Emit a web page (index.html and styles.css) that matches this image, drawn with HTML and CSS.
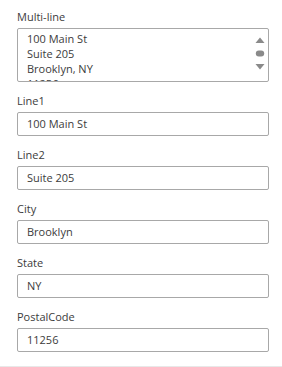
FILE: index.html
```html
<!DOCTYPE html>
<html>
<head>
<meta charset="utf-8">
<link rel="stylesheet" href="styles.css">
</head>
<body>
<div class="form">
  <div class="field">
    <div class="label">Multi-line</div>
    <div class="textarea">
      <div class="ta-text">100 Main St<br>Suite 205<br>Brooklyn, NY<br>11256</div>
      <div class="ta-scroll">
        <svg width="10" height="44" viewBox="0 0 10 44">
          <polygon points="5,3.5 9.5,9 0.5,9" fill="#8a8a8a"/>
          <rect x="0.8" y="16.5" width="8.4" height="6" rx="3" fill="#8a8a8a"/>
          <polygon points="0.5,30 9.5,30 5,35.5" fill="#8a8a8a"/>
        </svg>
      </div>
    </div>
  </div>
  <div class="field">
    <div class="label">Line1</div>
    <div class="input">100 Main St</div>
  </div>
  <div class="field">
    <div class="label">Line2</div>
    <div class="input">Suite 205</div>
  </div>
  <div class="field">
    <div class="label">City</div>
    <div class="input">Brooklyn</div>
  </div>
  <div class="field">
    <div class="label">State</div>
    <div class="input">NY</div>
  </div>
  <div class="field">
    <div class="label">PostalCode</div>
    <div class="input">11256</div>
  </div>
</div>
<div class="footer-line"></div>
</body>
</html>
```
FILE: styles.css
```css
html, body {
  margin: 0;
  padding: 0;
  background: #ffffff;
}
body {
  font-family: "Open Sans", "Noto Sans", sans-serif;
  font-size: 11px;
  color: #3c3c3c;
}
.form {
  padding: 9px 13px 0 17px;
  display: flex;
  flex-direction: column;
}
.field {
  display: flex;
  flex-direction: column;
  margin-bottom: 11px;
}
.label {
  line-height: 16px;
  height: 16px;
  margin-bottom: 3px;
  color: #3c3c3c;
}
.input {
  box-sizing: border-box;
  height: 24px;
  border: 1px solid #a8a8a8;
  border-radius: 2px;
  padding: 0 9px;
  line-height: 22px;
  font-size: 11px;
  color: #3c3c3c;
}
.textarea {
  box-sizing: border-box;
  height: 54px;
  border: 1px solid #a8a8a8;
  border-radius: 2px;
  display: flex;
  overflow: hidden;
}
.ta-text {
  flex: 1;
  padding: 2px 9px 0;
  line-height: 15px;
  font-size: 11px;
  color: #3c3c3c;
  overflow: hidden;
}
.ta-scroll {
  width: 16px;
  display: flex;
  align-items: flex-start;
  justify-content: center;
  padding-top: 5px;
}
.footer-line {
  margin-top: 3px;
  height: 2px;
  background: #e8e8e8;
}
```
